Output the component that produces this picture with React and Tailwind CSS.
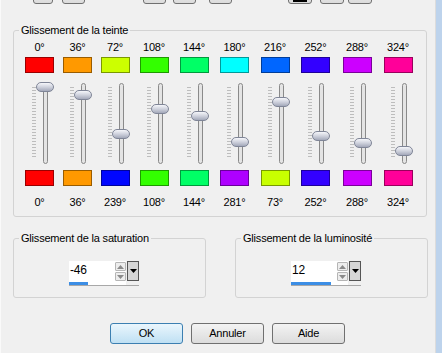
import React from "react";

const hues = [
  { from: "0°", to: "0°", top: "bg-[#ff0000]", bottom: "bg-[#ff0000]", pos: 2 },
  { from: "36°", to: "36°", top: "bg-[#ff9900]", bottom: "bg-[#ff9900]", pos: 10 },
  { from: "72°", to: "239°", top: "bg-[#ccff00]", bottom: "bg-[#0006ff]", pos: 49 },
  { from: "108°", to: "108°", top: "bg-[#33ff00]", bottom: "bg-[#33ff00]", pos: 24 },
  { from: "144°", to: "144°", top: "bg-[#00ff66]", bottom: "bg-[#00ff66]", pos: 31 },
  { from: "180°", to: "281°", top: "bg-[#00ffff]", bottom: "bg-[#ae00ff]", pos: 57 },
  { from: "216°", to: "73°", top: "bg-[#0066ff]", bottom: "bg-[#c8ff00]", pos: 17 },
  { from: "252°", to: "252°", top: "bg-[#3300ff]", bottom: "bg-[#3300ff]", pos: 51 },
  { from: "288°", to: "288°", top: "bg-[#cc00ff]", bottom: "bg-[#cc00ff]", pos: 58 },
  { from: "324°", to: "324°", top: "bg-[#ff0099]", bottom: "bg-[#ff0099]", pos: 66 },
];

// bottoms of the toolbar buttons cut off by the top of the picture
const toolButtons = [
  "ml-[32px] w-[20px]",
  "ml-[9px] w-[23px]",
  "ml-[58px] w-[23px]",
  "ml-[7px] w-[23px]",
  "ml-[13px] w-[23px]",
  "ml-[56px] w-[24px]",
  "ml-[8px] w-[24px]",
  "ml-[4px] w-[24px]",
];

const Group = ({ title, className, children }) => (
  <div className={`relative rounded-[3px] border border-[#d3d3d3] ${className}`}>
    <span className="absolute left-[5px] top-[-7px] bg-[#f0f0f0] px-[2px] leading-[12px]">
      {title}
    </span>
    {children}
  </div>
);

const HueColumn = ({ hue }) => (
  <div className="flex flex-col items-center">
    <span className="h-[12px] leading-[12px]">{hue.from}</span>
    <div className={`mt-[4px] h-[16px] w-[29px] border border-black/40 ${hue.top}`} />
    <div className="relative mt-[7px] h-[86px] w-[29px]">
      <div className="absolute left-[7px] top-[7px] h-[70px] w-[4px] bg-[repeating-linear-gradient(to_bottom,#bdbdbd_0px,#bdbdbd_1px,transparent_1px,transparent_3px)]" />
      <div className="absolute left-[18px] top-[3px] h-[81px] w-[5px] rounded-full border border-[#8a8a8a] bg-[#e4e4e4]" />
      <div
        className="absolute left-[11px] h-[10px] w-[18px] rounded-[5px] border border-[#7f8597] bg-linear-to-b from-[#f5f6fa] via-[#cfd2dd] to-[#a4a9ba]"
        style={{ top: hue.pos }}
      />
    </div>
    <div className={`mt-[4px] h-[16px] w-[29px] border border-black/40 ${hue.bottom}`} />
    <span className="mt-[10px] h-[12px] leading-[12px]">{hue.to}</span>
  </div>
);

const Arrow = ({ down }) => (
  <svg width="7" height="4" viewBox="0 0 7 4">
    <path d={down ? "M0 0h7L3.5 4z" : "M0 4h7L3.5 0z"} fill="#8a8a8a" />
  </svg>
);

const SpinBox = ({ value, bar }) => (
  <div className="flex w-[70px] flex-col border-b border-[#a8a8a8]">
    <div className="flex h-[20px]">
      <div className="flex w-[57px] bg-white">
        <span className="w-[46px] pl-[1px] pt-[3px] text-[12px] leading-[12px] text-black">{value}</span>
        <div className="flex w-[11px] flex-col gap-[1px] pt-[1px]">
          <div className="flex h-[9px] items-center justify-center rounded-[1px] border border-[#b5b5b5] bg-[#ededed]">
            <Arrow />
          </div>
          <div className="flex h-[9px] items-center justify-center rounded-[1px] border border-[#b5b5b5] bg-[#ededed]">
            <Arrow down />
          </div>
        </div>
      </div>
      <div className="ml-[1px] flex w-[12px] items-center justify-center border border-[#555555] bg-[#d6d6d6]">
        <svg width="7" height="4" viewBox="0 0 7 4">
          <path d="M0 0h7L3.5 4z" fill="#000" />
        </svg>
      </div>
    </div>
    <div className="h-[4px] w-[57px] bg-white pt-[1px]">
      <div className={`h-[3px] bg-[#3c8ee5] ${bar}`} />
    </div>
  </div>
);

const Button = ({ children, primary }) => (
  <button
    className={`h-[21px] w-[73px] rounded-[3px] border text-[11px] leading-[11px] text-black ${
      primary
        ? "border-[#3c7fb1] bg-linear-to-b from-[#eaf6fd] to-[#bfe0f3]"
        : "border-[#707070] bg-linear-to-b from-[#f3f3f3] to-[#dcdcdc]"
    }`}
  >
    {children}
  </button>
);

export default function App() {
  return (
    <div className="flex h-[353px] w-[442px] bg-[#f0f0f0] font-['Liberation_Sans',Arial,sans-serif] text-[11px] tracking-[-0.2px] text-black">
      <div className="flex w-[436px] flex-col border-l border-[#fafafa] border-r border-r-[#dcdcdc]">
        <div className="flex h-[5px] overflow-hidden">
          {toolButtons.map((b, i) => (
            <div
              key={i}
              className={`-mt-[16px] flex h-[20px] shrink-0 items-end justify-center rounded-[3px] border border-[#707070] bg-linear-to-b from-[#f3f3f3] to-[#dcdcdc] pb-[1px] ${b}`}
            >
              {i === 5 && <div className="h-[6px] w-[14px] border-2 border-t-0 border-black bg-white" />}
            </div>
          ))}
        </div>

        <Group title="Glissement de la teinte" className="ml-[12px] mt-[25px] w-[414px] pb-[8px] pl-[6px] pt-[10px]">
          <div className="grid grid-cols-[39px_37px_38px_40px_40px_41px_40px_41px_42px_40px]">
            {hues.map((h) => (
              <HueColumn key={h.from} hue={h} />
            ))}
          </div>
        </Group>

        <div className="ml-[12px] mt-[21px] flex gap-[29px]">
          <Group title="Glissement de la saturation" className="h-[60px] w-[193px] pl-[55px] pt-[22px]">
            <SpinBox value="-46" bar="w-[19px]" />
          </Group>
          <Group title="Glissement de la luminosité" className="h-[60px] w-[193px] pl-[55px] pt-[22px]">
            <SpinBox value="12" bar="w-[40px]" />
          </Group>
        </div>

        <div className="ml-[109px] mt-[25px] flex gap-[8px]">
          <Button primary>OK</Button>
          <Button>Annuler</Button>
          <Button>Aide</Button>
        </div>
      </div>
      <div className="flex-1 bg-[#bdd3ec]" />
    </div>
  );
}
